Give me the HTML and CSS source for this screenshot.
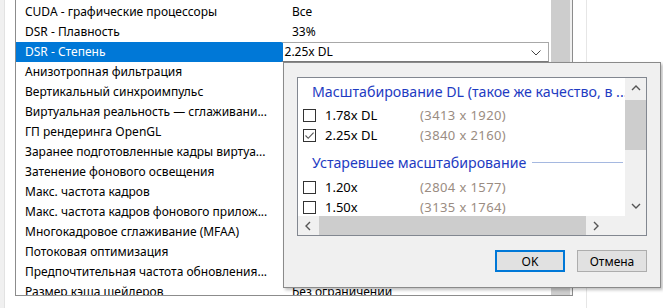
FILE: index.html
```html
<!DOCTYPE html>
<html>
    <head>
        <title>Параметры 3D</title>
        <link rel="stylesheet" href="styles.css">
    </head>
    <body>
        <div class="edge"></div>
        <div class="pane">
            <div class="grid">
                <div class="rows">
                    <div class="row"><span class="name">CUDA - графические процессоры</span><span class="value">Все</span></div>
                    <div class="row"><span class="name">DSR - Плавность</span><span class="value">33%</span></div>
                    <div class="row selected">
                        <span class="name">DSR - Степень</span>
                        <span class="combo">2.25x DL
                            <svg class="chevron" width="10" height="6" viewBox="0 0 10 6"><path d="M0.5 0.5 L5 5 L9.5 0.5" fill="none" stroke="#444" stroke-width="1"/></svg>
                        </span>
                    </div>
                    <div class="row"><span class="name">Анизотропная фильтрация</span><span class="value"></span></div>
                    <div class="row"><span class="name">Вертикальный синхроимпульс</span><span class="value"></span></div>
                    <div class="row"><span class="name">Виртуальная реальность — сглаживани...</span><span class="value"></span></div>
                    <div class="row"><span class="name">ГП рендеринга OpenGL</span><span class="value"></span></div>
                    <div class="row"><span class="name">Заранее подготовленные кадры виртуа...</span><span class="value"></span></div>
                    <div class="row"><span class="name">Затенение фонового освещения</span><span class="value"></span></div>
                    <div class="row"><span class="name">Макс. частота кадров</span><span class="value"></span></div>
                    <div class="row"><span class="name">Макс. частота кадров фонового прилож...</span><span class="value"></span></div>
                    <div class="row"><span class="name">Многокадровое сглаживание (MFAA)</span><span class="value"></span></div>
                    <div class="row"><span class="name">Потоковая оптимизация</span><span class="value"></span></div>
                    <div class="row"><span class="name">Предпочтительная частота обновления...</span><span class="value"></span></div>
                    <div class="row"><span class="name">Размер кэша шейдеров</span><span class="value">Без ограничений</span></div>
                </div>
                <div class="vscroll"></div>
            </div>
            <div class="side"></div>
        </div>

        <div class="popup">
            <div class="listbox">
                <div class="list-main">
                    <div class="list-content">
                        <div class="group">Масштабирование DL (такое же качество, в ...</div>
                        <div class="item"><span class="check"></span><span class="factor">1.78x DL</span><span class="res">(3413 x 1920)</span></div>
                        <div class="item"><span class="check">
                            <svg width="11" height="11" viewBox="0 0 11 11"><path d="M1.5 5.5 L4.2 8.3 L9.6 2.6" fill="none" stroke="#555" stroke-width="1.1"/></svg>
                        </span><span class="factor">2.25x DL</span><span class="res">(3840 x 2160)</span></div>
                        <div class="group legacy"><span>Устаревшее масштабирование</span><span class="rule"></span></div>
                        <div class="item"><span class="check"></span><span class="factor">1.20x</span><span class="res">(2804 x 1577)</span></div>
                        <div class="item"><span class="check"></span><span class="factor">1.50x</span><span class="res">(3135 x 1764)</span></div>
                    </div>
                    <div class="sb-v">
                        <svg class="arrow" width="10" height="6" viewBox="0 0 10 6"><path d="M1 5 L5 1 L9 5" fill="none" stroke="#555" stroke-width="1.4"/></svg>
                        <div class="sb-v-thumb"></div>
                        <div class="sb-v-rest"></div>
                        <svg class="arrow" width="10" height="6" viewBox="0 0 10 6"><path d="M1 1 L5 5 L9 1" fill="none" stroke="#555" stroke-width="1.4"/></svg>
                    </div>
                </div>
                <div class="sb-h">
                    <svg class="arrow" width="6" height="10" viewBox="0 0 6 10"><path d="M5 1 L1 5 L5 9" fill="none" stroke="#555" stroke-width="1.4"/></svg>
                    <div class="sb-h-thumb"></div>
                    <svg class="arrow" width="6" height="10" viewBox="0 0 6 10"><path d="M1 1 L5 5 L1 9" fill="none" stroke="#555" stroke-width="1.4"/></svg>
                    <div class="corner"></div>
                </div>
            </div>
            <div class="buttons">
                <button class="btn default">OK</button>
                <button class="btn">Отмена</button>
            </div>
        </div>
    </body>
</html>
```

FILE: styles.css
```css
body {
    margin: 0;
    height: 308px;
    overflow: hidden;
    display: flex;
    background: #fff;
    font-family: "Noto Sans", "Open Sans", sans-serif;
    font-size: 12px;
    color: #000;
}
.edge {
    width: 4px;
    background: #f0f0f0;
    border-right: 1px solid #e2e2e2;
}
.pane {
    display: flex;
    align-items: flex-start;
    padding-left: 10px;
}
.grid {
    display: flex;
    width: 556px;
    height: 295px;
    border: 1px solid #8c8c8c;
    border-top: none;
    overflow: hidden;
}
.rows {
    width: 533px;
    padding-top: 2px;
}
.row {
    display: flex;
    height: 20px;
    line-height: 20px;
    white-space: nowrap;
}
.name {
    width: 257px;
    padding-left: 9px;
    overflow: hidden;
}
.value {
    padding-left: 10px;
}
.row.selected .name {
    background: #0078d7;
    color: #fff;
}
.combo {
    position: relative;
    width: 265px;
    height: 18px;
    line-height: 18px;
    border: 1px solid #a8a8a8;
    border-left: 2px solid #0078d7;
    border-bottom-color: #7a7a7a;
    padding-left: 2px;
}
.chevron {
    position: absolute;
    right: 7px;
    top: 7px;
}
.vscroll {
    width: 19px;
    margin-left: 2px;
    background: #cdcdcd;
    border-right: 2px solid #f0f0f0;
}
.side {
    width: 13px;
    height: 308px;
    border-right: 1px solid #e6e6e6;
}

/* drop-down of the DSR factor */
.popup {
    position: absolute;
    left: 283px;
    top: 62px;
    width: 378px;
    height: 226px;
    background: #f0f0f0;
    border: 1px solid #8a8a8a;
    box-shadow: 2px 2px 3px rgba(0, 0, 0, 0.25);
    padding: 14px 12px 0 13px;
    box-sizing: border-box;
}
.listbox {
    width: 350px;
    height: 159px;
    border: 1px solid #828790;
    box-sizing: border-box;
    background: #fff;
    display: flex;
    flex-direction: column;
}
.list-main {
    display: flex;
    height: 138px;
}
.list-content {
    flex: 1;
    overflow: hidden;
    white-space: nowrap;
}
.group {
    font-size: 14.2px;
    color: #1e3bc2;
    padding-left: 14px;
    height: 27px;
    line-height: 28px;
    overflow: hidden;
}
.group.legacy {
    display: flex;
    align-items: center;
    height: 29px;
    padding-top: 3px;
    line-height: 29px;
}
.rule {
    flex: 1;
    height: 1px;
    margin-left: 6px;
    margin-right: 2px;
    background: #a5b8e0;
}
.item {
    display: flex;
    align-items: center;
    height: 20px;
    padding-left: 5px;
    font-size: 13px;
}
.check {
    width: 13px;
    height: 13px;
    border: 1px solid #333;
    box-sizing: border-box;
    display: flex;
    align-items: center;
    justify-content: center;
    margin-right: 9px;
}
.factor {
    width: 95px;
}
.res {
    color: #9a8c82;
    letter-spacing: 0.4px;
}
.sb-v {
    width: 21px;
    background: #f0f0f0;
    display: flex;
    flex-direction: column;
    align-items: center;
}
.sb-v .arrow {
    margin: 7px 0;
}
.sb-v-thumb {
    width: 100%;
    height: 50px;
    background: #cdcdcd;
    margin-top: 2px;
}
.sb-v-rest {
    flex: 1;
}
.sb-h {
    height: 19px;
    background: #f0f0f0;
    display: flex;
    align-items: center;
}
.sb-h .arrow {
    margin: 0 7px;
}
.sb-h-thumb {
    width: 267px;
    height: 100%;
    background: #cdcdcd;
    margin-left: 1px;
}
.corner {
    width: 21px;
    height: 100%;
    margin-left: auto;
    background: #f0f0f0;
}
.buttons {
    display: flex;
    justify-content: flex-end;
    gap: 12px;
    margin-top: 14px;
    padding-right: 1px;
}
.btn {
    width: 70px;
    height: 22px;
    font-family: inherit;
    font-size: 12px;
    background: #e1e1e1;
    border: 1px solid #adadad;
    padding: 0;
}
.btn.default {
    border: 2px solid #0078d7;
}
```
